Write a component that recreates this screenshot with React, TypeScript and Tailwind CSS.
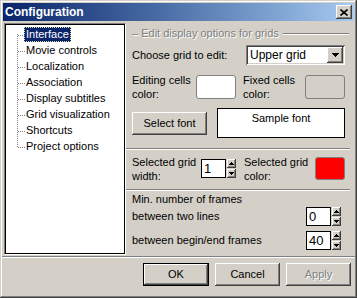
import React from "react"

// Win2000 style 3D edges
const raised =
  "bg-[#d4d0c8] shadow-[inset_-1px_-1px_0_#404040,inset_1px_1px_0_#ffffff,inset_-2px_-2px_0_#808080,inset_2px_2px_0_#d4d0c8]"
const sunken =
  "shadow-[inset_1px_1px_0_#808080,inset_-1px_-1px_0_#ffffff,inset_2px_2px_0_#404040,inset_-2px_-2px_0_#d4d0c8]"
const etched = "text-[#808080] [text-shadow:1px_1px_0_#ffffff]"

const treeItems = [
  "Interface",
  "Movie controls",
  "Localization",
  "Association",
  "Display subtitles",
  "Grid visualization",
  "Shortcuts",
  "Project options",
]

function Tri({ up, w, h }: { up?: boolean; w: number; h: number }) {
  return (
    <svg width={w} height={h} viewBox={`0 0 ${w} ${h}`} shapeRendering="crispEdges">
      <polygon points={up ? `0,${h} ${w / 2},0 ${w},${h}` : `0,0 ${w},0 ${w / 2},${h}`} fill="#000" />
    </svg>
  )
}

function SpinBtn({ up }: { up?: boolean }) {
  return (
    <div className={`w-[9px] h-[9px] flex items-center justify-center ${raised}`}>
      <Tri up={up} w={5} h={3} />
    </div>
  )
}

function Spinner({ value }: { value: string }) {
  return (
    <div className="flex items-center gap-[1px]">
      <div className="w-[25px] h-[19px] bg-white border border-black pl-[2px] text-[13px] leading-[17px]">
        {value}
      </div>
      <div className="flex flex-col gap-[1px]">
        <SpinBtn up />
        <SpinBtn />
      </div>
    </div>
  )
}

function Swatch({ color }: { color: string }) {
  return <div className={`rounded-[3px] border border-[#808080] ${color}`} />
}

function Separator() {
  return (
    <div className="-ml-[6px] -mr-[5px] h-[2px] border-t border-[#808080] border-b border-b-white" />
  )
}

function DlgButton({ label, def, disabled }: { label: string; def?: boolean; disabled?: boolean }) {
  const inner = (
    <div className={`w-full h-full flex items-center justify-center ${raised} ${disabled ? etched : ""}`}>
      {label}
    </div>
  )
  return def ? (
    <div className="w-[66px] h-[23px] border border-black">{inner}</div>
  ) : (
    <div className="w-[65px] h-[23px]">{inner}</div>
  )
}

export default function App() {
  return (
    <div className="w-[357px] h-[298px] bg-[#d4d0c8] p-[3px] flex flex-col text-[11px] text-black font-['Liberation_Sans',Arial,sans-serif] shadow-[inset_-1px_-1px_0_#404040,inset_1px_1px_0_#d4d0c8,inset_-2px_-2px_0_#808080,inset_2px_2px_0_#ffffff]">
      {/* title bar */}
      <div className="h-[18px] flex items-center pl-[2px] pr-[2px] bg-gradient-to-r from-[#0a246a] to-[#a6caf0]">
        <span className="text-white font-bold text-[12px]">Configuration</span>
        <div className={`ml-auto w-[16px] h-[14px] flex items-center justify-center ${raised}`}>
          <svg width="8" height="7" viewBox="0 0 8 7">
            <path d="M0.5 0.5 L7.5 6.5 M7.5 0.5 L0.5 6.5" stroke="#000" strokeWidth="1.6" />
          </svg>
        </div>
      </div>

      <div className="flex h-[235px]">
        {/* tree */}
        <div className="relative ml-[1px] mt-[2px] w-[124px] h-[232px] border border-t-[#808080] border-l-[#808080] border-r-white border-b-white">
          <div className="w-full h-full bg-white border border-black pt-[1px] pl-[18px]">
            {treeItems.map((item, i) => (
              <div key={item} className="h-[16px] flex items-center">
                <span
                  className={
                    i === 0
                      ? "h-[15px] px-[1px] leading-[13px] bg-[#0a246a] text-white border border-dotted border-[#e0e0a0]"
                      : "px-[2px] leading-[15px]"
                  }
                >
                  {item}
                </span>
              </div>
            ))}
          </div>
          <svg className="absolute left-0 top-0" width="30" height="130" shapeRendering="crispEdges">
            <line x1="12.5" y1="10" x2="12.5" y2="124" stroke="#808080" strokeDasharray="1 1" />
            {treeItems.map((_, i) => (
              <line key={i} x1="13" y1={11.5 + i * 16} x2="20" y2={11.5 + i * 16} stroke="#808080" strokeDasharray="1 1" />
            ))}
          </svg>
        </div>

        {/* options panel */}
        <div className="flex-1 flex flex-col pl-[6px] pr-[9px]">
          <div className="mt-[6px] h-[13px] flex items-center">
            <span className={etched}>– Edit display options for grids</span>
            <div className="ml-[4px] -mr-[4px] flex-1 h-[2px] border-t border-[#808080] border-b border-b-white" />
          </div>

          <div className="mt-[5px] h-[20px] flex items-center">
            <span>Choose grid to edit:</span>
            <div className={`ml-auto w-[99px] h-[20px] bg-white flex items-center pl-[4px] pr-[2px] ${sunken}`}>
              <span className="text-[12px]">Upper grid</span>
              <div className={`ml-auto w-[16px] h-[16px] flex items-center justify-center ${raised}`}>
                <Tri w={7} h={4} />
              </div>
            </div>
          </div>

          <div className="mt-[10px] h-[24px] flex">
            <div className="w-[64px] leading-[14px] -mt-[2px]">
              Editing cells
              <br />
              color:
            </div>
            <div className="w-[40px] h-[24px] rounded-[3px] border border-[#808080] bg-white" />
            <div className="ml-[7px] w-[62px] leading-[14px] -mt-[2px]">
              Fixed cells
              <br />
              color:
            </div>
            <div className="w-[40px] h-[24px] rounded-[3px] border border-[#808080] bg-[#d4d0c8]" />
          </div>

          <div className="mt-[9px] h-[30px] flex justify-between">
            <div className={`mt-[4px] w-[75px] h-[23px] flex items-center justify-center ${raised}`}>Select font</div>
            <div className="w-[128px] h-[30px] bg-white border border-black text-center pt-[1px]">Sample font</div>
          </div>

          <div className="mt-[10px]">
            <Separator />
          </div>

          <div className="mt-[7px] h-[23px] flex items-center">
            <div className="w-[69px] leading-[14px]">
              Selected grid
              <br />
              width:
            </div>
            <Spinner value="1" />
            <div className="ml-[8px] w-[69px] leading-[14px]">
              Selected grid
              <br />
              color:
            </div>
            <div className="ml-auto w-[30px] h-[23px] rounded-[3px] border border-[#808080] bg-[#ff0000]" />
          </div>

          <div className="mt-[9px]">
            <Separator />
          </div>

          <div className="mt-[2px] h-[13px] leading-[13px]">Min. number of frames</div>
          <div className="mt-[1px] h-[19px] flex items-center pr-[4px]">
            <span>between two lines</span>
            <div className="ml-auto">
              <Spinner value="0" />
            </div>
          </div>
          <div className="mt-[5px] h-[19px] flex items-center pr-[4px]">
            <span>between begin/end frames</span>
            <div className="ml-auto">
              <Spinner value="40" />
            </div>
          </div>
        </div>
      </div>

      <div className="-mx-[1px] h-[2px] border-t border-[#808080] border-b border-b-white" />

      <div className="mt-[5px] flex justify-end gap-[6px] pr-[3px]">
        <DlgButton label="OK" def />
        <DlgButton label="Cancel" />
        <DlgButton label="Apply" disabled />
      </div>
    </div>
  )
}
